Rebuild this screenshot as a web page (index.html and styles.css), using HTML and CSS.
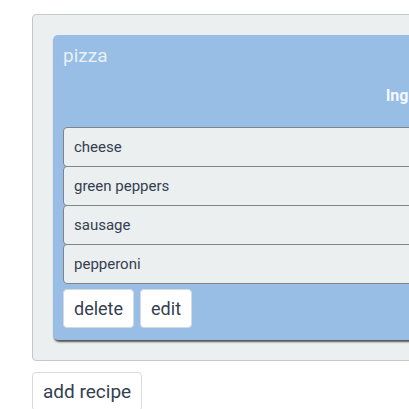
FILE: index.html
```html
<!DOCTYPE html>
<html>
<head>
<meta charset="utf-8">
<link rel="stylesheet" href="styles.css">
</head>
<body>
<div class="page">
  <div class="well">
    <div class="panel">
      <h3 class="title">pizza</h3>
      <h4 class="subtitle">Ingredients</h4>
      <ul class="list">
        <li class="item">cheese</li>
        <li class="item">green peppers</li>
        <li class="item">sausage</li>
        <li class="item">pepperoni</li>
      </ul>
      <div class="actions">
        <button class="btn">delete</button>
        <button class="btn">edit</button>
      </div>
    </div>
  </div>
  <button class="btn add">add recipe</button>
</div>
</body>
</html>
```

FILE: styles.css
```css
html, body {
  margin: 0;
  padding: 0;
  overflow: hidden;
  background: #ffffff;
}
body {
  font-family: Roboto, "Liberation Sans", sans-serif;
  color: #34404f;
}
.page {
  padding: 14px 0 0 32px;
  width: 789px;
}
.well {
  background: #ebeff0;
  border: 1px solid #c4c8cb;
  border-radius: 4px;
  padding: 20px;
}
.panel {
  background: #98bee6;
  border-radius: 5px;
  padding: 10px 10px 12px;
  box-shadow: 1px 2px 2px rgba(0, 0, 0, 0.65);
}
.title {
  margin: 0;
  font-size: 19px;
  font-weight: 400;
  line-height: 21px;
  color: rgba(255, 255, 255, 0.78);
}
.subtitle {
  margin: 21px 0 22px;
  font-size: 16px;
  font-weight: 700;
  line-height: 18px;
  text-align: center;
  color: rgba(255, 255, 255, 0.92);
}
.list {
  list-style: none;
  margin: 0;
  padding: 0;
}
.item {
  background: #ebeff0;
  border: 1px solid #7f8587;
  border-radius: 4px;
  padding: 8px 10px;
  font-size: 15px;
  line-height: 22px;
  margin-bottom: -1px;
}
.actions {
  display: flex;
  gap: 6px;
  margin-top: 6px;
}
.btn {
  font-family: Roboto, "Liberation Sans", sans-serif;
  font-size: 18px;
  line-height: 21px;
  color: #34404f;
  background: #ffffff;
  border: 1px solid #d7dadc;
  border-radius: 4px;
  padding: 8px 10px;
}
.add {
  margin-top: 11px;
  font-size: 19px;
}
```
